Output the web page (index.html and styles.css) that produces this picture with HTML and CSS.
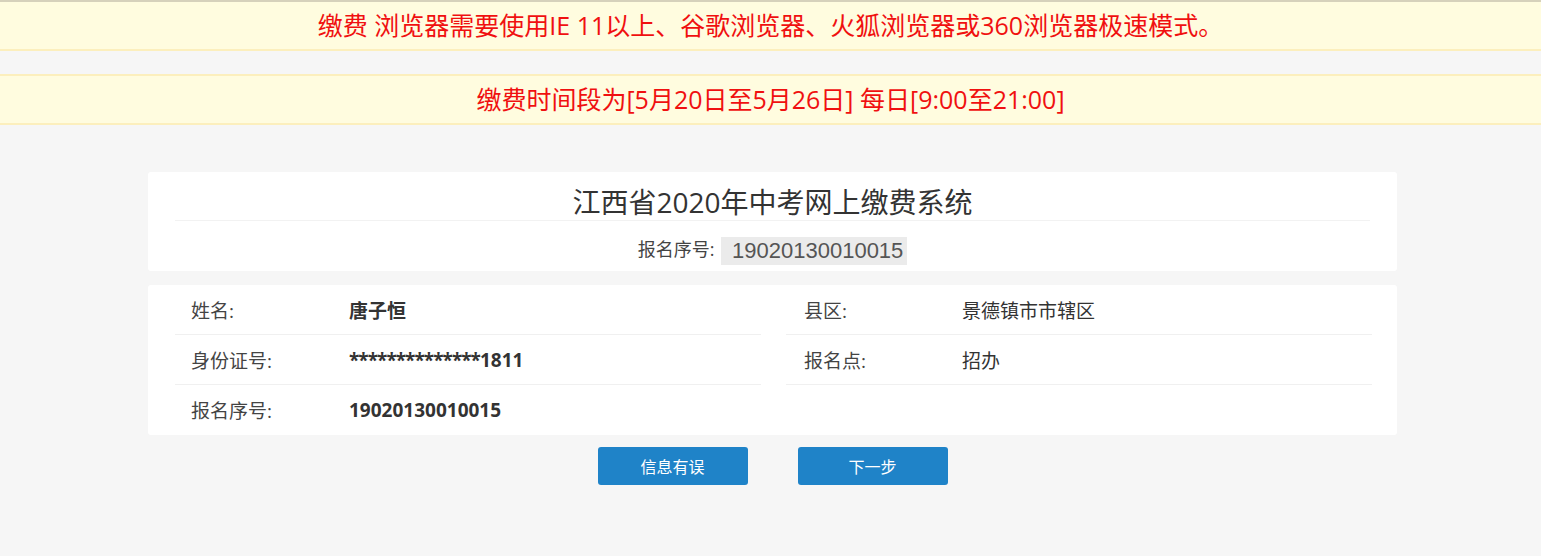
FILE: index.html
```html
<!DOCTYPE html>
<html lang="zh-CN">
<head>
    <meta charset="UTF-8">
    <meta name="viewport" content="width=device-width, initial-scale=1.0">
    <title>江西省2020年中考网上缴费系统</title>
    <link rel="stylesheet" href="styles.css">
</head>
<body>
    <div class="notice notice-first">缴费 浏览器需要使用IE 11以上、谷歌浏览器、火狐浏览器或360浏览器极速模式。</div>
    <div class="notice">缴费时间段为[5月20日至5月26日] 每日[9:00至21:00]</div>

    <div class="main">
        <div class="card head-card">
            <h1 class="title">江西省2020年中考网上缴费系统</h1>
            <div class="serial">报名序号: <span class="serial-no">19020130010015</span></div>
        </div>

        <div class="card info-card">
            <div class="col">
                <div class="row"><span class="label">姓名:</span><span class="value bold">唐子恒</span></div>
                <div class="row"><span class="label">身份证号:</span><span class="value bold"><span class="mask">**************</span>1811</span></div>
                <div class="row last"><span class="label">报名序号:</span><span class="value bold">19020130010015</span></div>
            </div>
            <div class="col right">
                <div class="row"><span class="label">县区:</span><span class="value">景德镇市市辖区</span></div>
                <div class="row"><span class="label">报名点:</span><span class="value">招办</span></div>
            </div>
        </div>

        <div class="actions">
            <button class="btn">信息有误</button>
            <button class="btn">下一步</button>
        </div>
    </div>
</body>
</html>
```

FILE: styles.css
```css
body {
  margin: 0;
  background-color: #f6f6f6;
  font-family: "Open Sans", "Noto Sans CJK SC", sans-serif;
  color: #333;
}

/* yellow notice bars */
.notice {
  background-color: #fffcdf;
  border-top: 2px solid #fcefbd;
  border-bottom: 2px solid #fcefbd;
  color: #f01010;
  font-size: 25px;
  line-height: 47px;
  text-align: center;
}

.notice-first {
  border-top: 2px solid #d6d1bb;
  margin-bottom: 23px;
}

.main {
  box-sizing: border-box;
  width: 1253px;
  margin: 47px auto 0;
  padding-left: 4px;
}

.card {
  background-color: #fff;
  border-radius: 3px;
}

/* title card */
.head-card {
  padding: 12px 27px 0;
  text-align: center;
}

.title {
  margin: 0;
  font-size: 28px;
  font-weight: normal;
  line-height: 36px;
  color: #333;
  border-bottom: 1px solid #f2f2f2;
}

.serial {
  padding-top: 6px;
  font-size: 18px;
  line-height: 44px;
  color: #444;
}

.serial-no {
  display: inline-block;
  margin-left: 2px;
  padding: 0 4px 0 11px;
  background-color: #ebebeb;
  font-family: "Liberation Sans", sans-serif;
  font-size: 22px;
  line-height: 28px;
  color: #555;
  vertical-align: middle;
}

/* info card */
.info-card {
  display: grid;
  grid-template-columns: 1fr 1fr;
  column-gap: 25px;
  margin-top: 14px;
  padding: 0 25px 0 27px;
}

.row {
  display: flex;
  align-items: center;
  height: 49px;
  border-bottom: 1px solid #f0f0f0;
  font-size: 19px;
}

.row.last {
  border-bottom: none;
  height: 50px;
}

.label {
  width: 158px;
  padding-left: 16px;
  color: #444;
}

.right .label {
  padding-left: 18px;
}

.value {
  color: #333;
}

.bold {
  font-weight: bold;
}

.mask {
  letter-spacing: -1px;
}

/* buttons */
.actions {
  display: flex;
  justify-content: center;
  gap: 50px;
  margin-top: 12px;
}

.btn {
  width: 150px;
  height: 38px;
  background-color: #1f83c8;
  color: #fff;
  border: none;
  border-radius: 3px;
  font-family: "Open Sans", "Noto Sans CJK SC", sans-serif;
  font-size: 16px;
  cursor: pointer;
}
```
